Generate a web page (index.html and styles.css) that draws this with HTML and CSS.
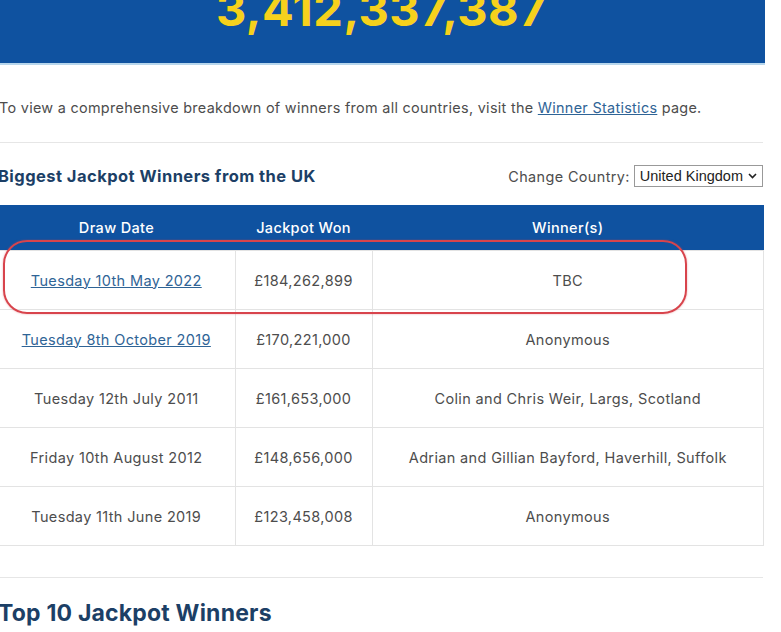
FILE: index.html
```html
<!DOCTYPE html>
<html>
<head>
<meta charset="utf-8">
<link rel="stylesheet" href="styles.css">
</head>
<body>
<div class="page">
  <div class="banner"><div class="total">3,412,337,387</div></div>
  <p class="intro">To view a comprehensive breakdown of winners from all countries, visit the <a href="#">Winner Statistics</a> page.</p>
  <div class="rule"></div>
  <div class="section-head">
    <h2 class="title">Biggest Jackpot Winners from the UK</h2>
    <label class="country">Change Country: <span class="select">United Kingdom <svg class="chev" width="9" height="6" viewBox="0 0 9 6"><path d="M1 1l3.5 3.5L8 1" fill="none" stroke="#222" stroke-width="1.6"/></svg></span></label>
  </div>
  <div class="table-wrap">
    <table class="winners">
      <thead>
        <tr><th class="c1">Draw Date</th><th class="c2">Jackpot Won</th><th class="c3">Winner(s)</th></tr>
      </thead>
      <tbody>
        <tr><td><a href="#">Tuesday 10th May 2022</a></td><td>£184,262,899</td><td>TBC</td></tr>
        <tr><td><a href="#">Tuesday 8th October 2019</a></td><td>£170,221,000</td><td>Anonymous</td></tr>
        <tr><td>Tuesday 12th July 2011</td><td>£161,653,000</td><td>Colin and Chris Weir, Largs, Scotland</td></tr>
        <tr><td>Friday 10th August 2012</td><td>£148,656,000</td><td>Adrian and Gillian Bayford, Haverhill, Suffolk</td></tr>
        <tr><td>Tuesday 11th June 2019</td><td>£123,458,008</td><td>Anonymous</td></tr>
      </tbody>
    </table>
    <div class="highlight"></div>
  </div>
  <div class="rule rule2"></div>
  <h2 class="title big">Top 10 Jackpot Winners</h2>
</div>
</body>
</html>
```
FILE: styles.css
```css
html, body { margin: 0; padding: 0; background: #fff; }
body { overflow: hidden; height: 632px; font-family: Inter, "Noto Sans", sans-serif; color: #4d4d4d; }
.page { width: 767px; margin-left: -2px; }
.banner { height: 65px; background: #0f52a0; border-bottom: 2px solid #b7d6ec; box-sizing: border-box; overflow: hidden; text-align: center; }
.total { font-family: Inter, sans-serif; font-weight: 700; font-size: 47px; line-height: 47px; margin-top: -15px; color: #f6d11c; letter-spacing: 0.5px; }
.intro { margin: 0; padding-top: 34px; font-size: 14.4px; line-height: 18px; height: 43px; box-sizing: content-box; color: #4d4d4d; padding-left: 1px; letter-spacing: 0.3px; }
.intro a { color: #2f6496; }
.rule { height: 1px; background: #e6e6e6; margin-right: 2px; }
.section-head { display: flex; justify-content: space-between; align-items: center; height: 62px; padding-top: 4px; box-sizing: border-box; }
.title { margin: 0; font-size: 16.5px; font-weight: 700; color: #1c3f66; letter-spacing: 0.45px; }
.country { font-size: 14.4px; color: #4d4d4d; display: flex; align-items: center; gap: 4px; margin-right: 2px; letter-spacing: 0.4px; }
.select { display: inline-flex; align-items: center; gap: 5px; border: 1px solid #999; height: 20px; padding: 0 5px 0 5px; font-size: 14.5px; color: #222; font-family: "Liberation Sans", Arial, sans-serif; letter-spacing: 0; }
.table-wrap { position: relative; }
.winners { width: 766px; border-collapse: collapse; font-size: 14.5px; letter-spacing: 0.35px; }
.winners th { background: #0f52a0; color: #fff; font-weight: 500; height: 45px; padding: 0; font-size: 14.5px; }
.winners td { height: 58px; padding: 0; text-align: center; border: 1px solid #e3e3e3; color: #4d4d4d; }
.winners tr td:first-child { border-left: none; }
.winners a { color: #2f6496; }
.c1 { width: 237px; }
.c2 { width: 137px; }
.highlight { position: absolute; left: 5px; top: 35px; width: 684px; height: 74px; border: 2px solid #d8444c; border-radius: 24px; box-sizing: border-box; box-shadow: 0 0 2px rgba(216,68,76,0.5); }
.rule2 { margin-top: 31px; }
.big { font-size: 23px; margin-top: 21px; letter-spacing: 0.2px; }
```
